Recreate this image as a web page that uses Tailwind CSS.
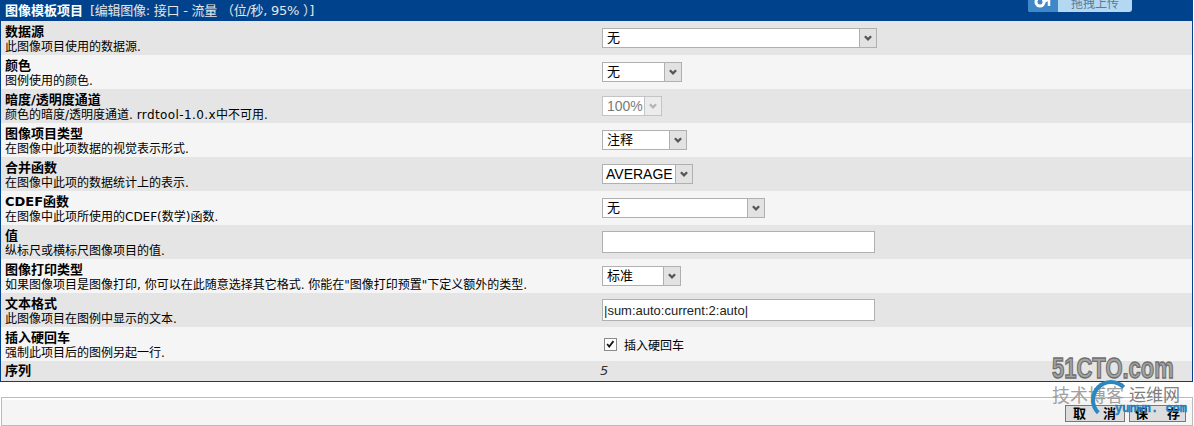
<!DOCTYPE html>
<html lang="zh-CN">
<head>
<meta charset="UTF-8">
<title>图像模板项目</title>
<script src="https://cdn.jsdelivr.net/npm/@tailwindcss/browser@4"></script>
</head>
<body class="relative h-[426px] w-[1194px] overflow-hidden bg-white font-['DejaVu_Sans','Noto_Sans_CJK_SC',sans-serif] text-[12px] leading-[14px] text-black">

<div class="mr-[1px] border border-t-0 border-[#00438c]">
  <div class="flex h-[21px] items-center bg-[#00438c] pl-[4px] text-[13px] text-[#e5e5e5]">
    <b class="text-white">图像模板项目</b><span class="ml-[7px] tracking-[-0.25px]">[编辑图像: 接口 - 流量 （位/秒, 95% ）]</span>
  </div>

  <div class="grid h-[34px] grid-cols-[601px_1fr] items-center bg-[#e5e5e5]">
    <div class="pl-[4px] pt-[2px]"><b class="mb-[1px] block text-[13px]">数据源</b>此图像项目使用的数据源.</div>
    <div class="relative w-[275px]">
      <select class="h-[20px] w-full appearance-none border border-[#b0b0b0] bg-white pl-[4px] text-[13px]"><option>无</option></select>
      <svg class="absolute right-0 top-0 h-[20px] w-[18px] border border-[#b0b0b0] bg-[#e2e2e2]" viewBox="0 0 18 20"><path d="M5.500 8l3.500 3.500 3.500-3.500" fill="none" stroke="#555" stroke-width="2.500"/></svg>
    </div>
  </div>

  <div class="grid h-[34px] grid-cols-[601px_1fr] items-center bg-[#f5f5f5]">
    <div class="pl-[4px] pt-[2px]"><b class="mb-[1px] block text-[13px]">颜色</b>图例使用的颜色.</div>
    <div class="relative w-[80px]">
      <select class="h-[20px] w-full appearance-none border border-[#b0b0b0] bg-white pl-[4px] text-[13px]"><option>无</option></select>
      <svg class="absolute right-0 top-0 h-[20px] w-[18px] border border-[#b0b0b0] bg-[#e2e2e2]" viewBox="0 0 18 20"><path d="M5.500 8l3.500 3.500 3.500-3.500" fill="none" stroke="#555" stroke-width="2.500"/></svg>
    </div>
  </div>

  <div class="grid h-[34px] grid-cols-[601px_1fr] items-center bg-[#e5e5e5]">
    <div class="pl-[4px] pt-[2px]"><b class="mb-[1px] block text-[13px]">暗度/透明度通道</b>颜色的暗度/透明度通道. <span class="tracking-[0.4px]">rrdtool-1.0.x</span>中不可用.</div>
    <div class="relative w-[60px]">
      <select disabled class="h-[20px] w-full appearance-none border border-[#c4c4c4] bg-white pl-[4px] font-['Liberation_Sans',sans-serif] text-[14px] text-[#7a7a7a]"><option>100%</option></select>
      <svg class="absolute right-0 top-0 h-[20px] w-[18px] border border-[#c4c4c4] bg-[#ececec]" viewBox="0 0 18 20"><path d="M5.500 8l3.500 3.500 3.500-3.500" fill="none" stroke="#b4b4b4" stroke-width="2.500"/></svg>
    </div>
  </div>

  <div class="grid h-[34px] grid-cols-[601px_1fr] items-center bg-[#f5f5f5]">
    <div class="pl-[4px] pt-[2px]"><b class="mb-[1px] block text-[13px]">图像项目类型</b>在图像中此项数据的视觉表示形式.</div>
    <div class="relative w-[85px]">
      <select class="h-[20px] w-full appearance-none border border-[#b0b0b0] bg-white pl-[4px] text-[13px]"><option>注释</option></select>
      <svg class="absolute right-0 top-0 h-[20px] w-[18px] border border-[#b0b0b0] bg-[#e2e2e2]" viewBox="0 0 18 20"><path d="M5.500 8l3.500 3.500 3.500-3.500" fill="none" stroke="#555" stroke-width="2.500"/></svg>
    </div>
  </div>

  <div class="grid h-[34px] grid-cols-[601px_1fr] items-center bg-[#e5e5e5]">
    <div class="pl-[4px] pt-[2px]"><b class="mb-[1px] block text-[13px]">合并函数</b>在图像中此项的数据统计上的表示.</div>
    <div class="relative w-[91px]">
      <select class="h-[20px] w-full appearance-none border border-[#b0b0b0] bg-white pl-[3px] font-['Liberation_Sans',sans-serif] text-[14px]"><option>AVERAGE</option></select>
      <svg class="absolute right-0 top-0 h-[20px] w-[18px] border border-[#b0b0b0] bg-[#e2e2e2]" viewBox="0 0 18 20"><path d="M5.500 8l3.500 3.500 3.500-3.500" fill="none" stroke="#555" stroke-width="2.500"/></svg>
    </div>
  </div>

  <div class="grid h-[34px] grid-cols-[601px_1fr] items-center bg-[#f5f5f5]">
    <div class="pl-[4px] pt-[2px]"><b class="mb-[1px] block text-[13px]">CDEF函数</b>在图像中此项所使用的CDEF(数学)函数.</div>
    <div class="relative w-[163px]">
      <select class="h-[20px] w-full appearance-none border border-[#b0b0b0] bg-white pl-[4px] text-[13px]"><option>无</option></select>
      <svg class="absolute right-0 top-0 h-[20px] w-[18px] border border-[#b0b0b0] bg-[#e2e2e2]" viewBox="0 0 18 20"><path d="M5.500 8l3.500 3.500 3.500-3.500" fill="none" stroke="#555" stroke-width="2.500"/></svg>
    </div>
  </div>

  <div class="grid h-[34px] grid-cols-[601px_1fr] items-center bg-[#e5e5e5]">
    <div class="pl-[4px] pt-[2px]"><b class="mb-[1px] block text-[13px]">值</b>纵标尺或横标尺图像项目的值.</div>
    <input type="text" class="h-[22px] w-[273px] border border-[#b0b0b0] bg-white">
  </div>

  <div class="grid h-[34px] grid-cols-[601px_1fr] items-center bg-[#f5f5f5]">
    <div class="pl-[4px] pt-[2px]"><b class="mb-[1px] block text-[13px]">图像打印类型</b>如果图像项目是图像打印, 你可以在此随意选择其它格式. 你能在"图像打印预置"下定义额外的类型.</div>
    <div class="relative w-[79px]">
      <select class="h-[20px] w-full appearance-none border border-[#b0b0b0] bg-white pl-[4px] text-[13px]"><option>标准</option></select>
      <svg class="absolute right-0 top-0 h-[20px] w-[18px] border border-[#b0b0b0] bg-[#e2e2e2]" viewBox="0 0 18 20"><path d="M5.500 8l3.500 3.500 3.500-3.500" fill="none" stroke="#555" stroke-width="2.500"/></svg>
    </div>
  </div>

  <div class="grid h-[34px] grid-cols-[601px_1fr] items-center bg-[#e5e5e5]">
    <div class="pl-[4px] pt-[2px]"><b class="mb-[1px] block text-[13px]">文本格式</b>此图像项目在图例中显示的文本.</div>
    <input type="text" value="|sum:auto:current:2:auto|" class="h-[22px] w-[273px] border border-[#b0b0b0] bg-white pl-[1px] font-['Liberation_Sans',sans-serif] text-[13px] text-[#222]">
  </div>

  <div class="grid h-[34px] grid-cols-[601px_1fr] items-center bg-[#f5f5f5]">
    <div class="pl-[4px] pt-[2px]"><b class="mb-[1px] block text-[13px]">插入硬回车</b>强制此项目后的图例另起一行.</div>
    <label class="flex items-center pl-[2px]">
      <svg class="h-[13px] w-[13px] border border-[#8a8a8a] bg-white" viewBox="0 0 13 13"><path d="M2.500 6l2.500 3 5-6.500" fill="none" stroke="#111" stroke-width="2"/></svg>
      <span class="ml-[7px] mt-[4px]">插入硬回车</span>
    </label>
  </div>

  <div class="grid h-[20px] grid-cols-[599px_1fr] items-center bg-[#e5e5e5]">
    <b class="pl-[4px] text-[13px]">序列</b>
    <i class="text-[13px] text-[#333]">5</i>
  </div>
</div>

<div class="ml-[1px] mr-[1px] mt-[15px] flex h-[29px] items-end justify-end border border-[#bbbbbb] bg-[#f5f5f5] pb-[3px] pr-[6px] shadow-[inset_0_2px_0_#fff]">
  <div class="flex gap-[4px]">
    <button class="flex h-[17px] w-[60px] items-center justify-between border border-[#777] bg-[#ddd] pl-[7px] pr-[8px] text-[13px] font-bold"><span>取</span><span>消</span></button>
    <button class="flex h-[17px] w-[57px] items-center justify-between border border-[#777] bg-[#ddd] px-[5px] text-[13px] font-bold"><span>保</span><span>存</span></button>
  </div>
</div>

<!-- upload tab at top right -->
<div class="absolute left-[1028px] top-[-8px] flex h-[20px] w-[104px] overflow-hidden rounded-[3px] bg-[#b5d8f2] text-[12px] text-[#5a7a96]">
  <div class="flex w-[30px] items-center justify-center bg-[#3f88c8]">
    <svg class="h-[12px] w-[22px]" viewBox="0 0 22 12"><circle cx="8" cy="6" r="4" fill="none" stroke="#fff" stroke-width="3"/><path d="M12 6l5-3M17 2v8" fill="none" stroke="#fff" stroke-width="2.500"/></svg>
  </div>
  <span class="flex-1 pt-[5px] text-center">拖拽上传</span>
</div>

<!-- watermark -->
<div class="pointer-events-none absolute left-[1052px] top-[354px] h-[72px] w-[142px]">
  <div class="w-[123px] origin-top scale-y-[1.35] overflow-visible whitespace-nowrap font-['Liberation_Sans',sans-serif] text-[22px] leading-[22px] font-bold text-[#a4a4a4] [-webkit-text-stroke:1px_#6f6f6f]">51CTO.com</div>
  <div class="absolute left-0 top-[30px] text-[18px] leading-[24px] text-[#a0a0a0]">技术博客</div>
  <div class="absolute left-[77px] top-[30px] text-[17px] leading-[22px] text-[#808080]">运维网</div>
  <div class="absolute left-[39px] top-[26px] h-[40px] w-[40px] rounded-full border-[4px] border-[#2c86c0] border-r-transparent border-b-transparent"></div>
  <div class="absolute left-[63px] top-[48px] font-['Liberation_Mono',monospace] text-[12px] leading-[14px] font-bold text-[#1f7fc0] [-webkit-text-stroke:0.4px_#1f7fc0]">yunwn. com</div>
</div>

</body>
</html>
